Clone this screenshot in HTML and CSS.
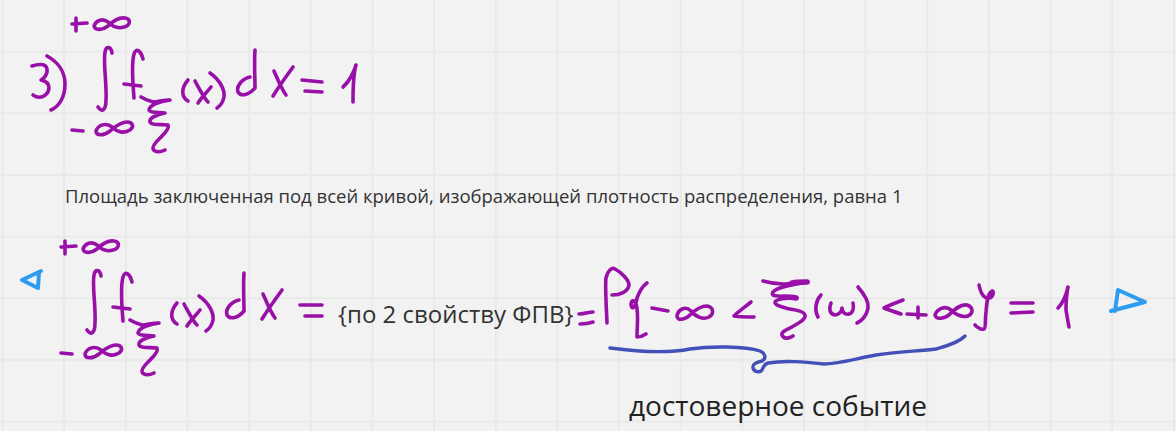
FILE: index.html
```html
<!DOCTYPE html>
<html lang="ru">
<head>
<meta charset="utf-8">
<title>Плотность распределения</title>
<link rel="stylesheet" href="styles.css">
</head>
<body>
<main class="board">
  <svg class="ink" width="1176" height="431" viewBox="0 0 1176 431" aria-hidden="true">
    <defs>
      <g id="integral">
        <path d="M72,24 L87,23 M76,18 L76,31"/>
        <path d="M94,26 C96,20 103,18 108,22 C112,26 118,29 124,27 C131,25 131,19 125,18 C118,17 112,22 108,26 C103,30 95,31 94,26Z"/>
        <path d="M112,53 C111,46 106,46 105,52 C103,62 107,85 106,100 C106,110 102,113 98,107"/>
        <path d="M143,59 C141,51 136,47 134,54 C131,65 133,85 134,98 M124,84 L141,86"/>
        <path d="M141,97 C146,100 150,101 153,102 C158,102 163,100 170,100 C163,101 150,104 149,110 C150,113 160,112 165,113 C160,114 149,117 150,122 C152,126 163,124 168,125 C170,129 163,135 160,138 C157,141 152,146 153,149 C155,153 161,152 165,150"/>
        <path d="M188,80 C181,88 181,97 188,101"/>
        <path d="M195,81 C200,90 204,98 208,102 M211,87 C207,92 201,98 198,103"/>
        <path d="M210,73 C220,80 225,90 224,97 C223,102 220,106 217,108"/>
        <path d="M255,50 C254,62 255,76 255,88 M250,77 C242,79 236,86 238,92 C241,97 249,95 255,88"/>
        <path d="M293,67 C285,78 278,88 273,96 M274,71 C278,80 282,90 286,95"/>
        <path d="M72,130 L83,131"/>
        <path d="M96,131 C98,125 106,122 112,127 C117,132 124,134 130,130 C135,126 132,122 127,122 C120,122 115,127 110,131 C104,136 96,136 96,131Z"/>
      </g>
    </defs>

    <g class="purple">
      <path d="M32,66 C38,64 46,63 47,69 C48,75 43,79 41,80 C46,81 49,84 49,88 C48,96 40,100 33,95"/>
      <path d="M47,56 C58,62 65,72 65,84 C65,96 60,106 51,110"/>
      <use href="#integral"/>
      <path d="M302,80 L322,82 M305,91 L322,92"/>
      <path d="M343,87 C349,82 354,72 356,65 C353,75 353,90 353,102"/>

      <use href="#integral" transform="translate(-11 223)"/>
      <path d="M300,305 L322,305 M305,316 L322,316"/>

      <path d="M579,314 C585,314 589,312 593,312 M580,324 C585,324 590,323 593,322"/>
      <path d="M607,323 C606,300 605,285 606,278 C608,270 612,267 615,269 C621,272 629,280 629,285 C628,292 620,295 612,295"/>
      <path d="M647,283 C644,285 640,290 637,298 C636,306 632,311 631,305 C631,300 634,299 636,304 C639,312 637,325 637,337 C640,337 643,336 646,334"/>
      <path d="M652,308 L668,311"/>
      <path d="M677,316 C678,310 685,305 691,311 C696,317 703,320 709,317 C715,313 713,307 707,306 C700,306 694,311 690,315 C685,320 677,321 677,316Z"/>
      <path d="M751,302 C745,307 738,312 734,316 C740,317 748,317 754,317"/>
      <path d="M763,281 C770,283 778,284 783,284 C790,284 800,282 808,282 C798,284 778,286 773,292 C771,295 774,296 778,296 C785,297 792,297 797,298 C790,298 777,298 775,302 C775,306 783,307 790,309 C797,310 804,312 805,315 C806,320 797,324 790,328 C786,330 781,332 782,335 C784,340 790,338 793,336"/>
      <path class="thick" d="M792,283 C797,282 802,282 807,282 M783,297 C787,297 792,297 796,298"/>
      <path d="M821,295 C816,300 814,310 818,317"/>
      <path d="M831,303 C829,308 829,314 835,315 C839,315 842,311 842,308 C842,312 845,315 849,314 C853,313 854,308 853,303"/>
      <path d="M858,287 C865,295 869,302 868,308 C867,315 862,321 857,323"/>
      <path d="M903,300 C896,303 889,305 884,308 C889,310 895,312 901,314"/>
      <path d="M907,314 L926,315 M918,307 L918,318"/>
      <path d="M935,315 C937,309 945,305 951,310 C955,314 962,318 968,316 C974,313 973,307 967,305 C960,304 954,310 950,314 C945,319 936,320 935,315Z"/>
      <path d="M979,285 C981,295 985,299 989,298 C994,297 994,290 992,291 C988,293 987,300 986,312 C985,320 986,328 984,329 C981,330 978,328 975,325"/>
      <path d="M1011,303 L1033,303 M1011,313 L1033,312"/>
      <path d="M1058,308 C1062,304 1066,296 1068,287 C1066,297 1066,307 1066,310 C1067,316 1068,322 1069,327"/>
    </g>

    <g class="blue-ink">
      <path d="M610,348 C640,352 670,353 690,349 C710,346 745,346 760,351 C765,353 767,358 762,361 C757,362 752,364 753,368 C754,372 760,373 762,370 C764,366 764,364 768,363 C785,360 805,362 824,364 C840,364 858,358 876,355 C895,352 920,351 936,349 C946,346 958,343 965,336"/>
    </g>

    <g class="sky">
      <path d="M41,271 L22,280 L38,288 L39,272"/>
      <path d="M1111,311 L1145,302 L1118,290 L1115,311"/>
    </g>
  </svg>

  <p class="note note-area">Площадь заключенная под всей кривой, изображающей плотность распределения, равна 1</p>
  <p class="note note-prop">{по 2 свойству ФПВ}</p>
  <p class="note note-event">достоверное событие</p>
</main>
</body>
</html>
```
FILE: styles.css
```css
html, body {
  margin: 0;
  padding: 0;
  height: 100%;
}

body {
  overflow: hidden;
  background-color: #f2f2f2;
  font-family: "Open Sans", "Noto Sans", sans-serif;
}

.board {
  position: relative;
  width: 1176px;
  height: 431px;
  overflow: hidden;
  background-image:
    linear-gradient(to right, #e9e9e9 2px, transparent 2px),
    linear-gradient(to bottom, #e9e9e9 2px, transparent 2px);
  background-size: 61.67px 61.67px;
  background-position: 1.5px -11px;
}

.ink {
  position: absolute;
  inset: 0;
  fill: none;
  stroke-linecap: round;
  stroke-linejoin: round;
}

.purple {
  stroke: #9810a8;
  stroke-width: 3.6;
}

.thick {
  stroke-width: 5.5;
}

.blue-ink {
  stroke: #4350b8;
  stroke-width: 3.4;
}

.sky {
  stroke: #2d9cf0;
  stroke-width: 4;
}

.note {
  position: absolute;
  margin: 0;
  white-space: nowrap;
  color: #333;
}

.note-area {
  left: 65px;
  top: 184px;
  font-size: 18.5px;
  line-height: 24px;
}

.note-prop {
  left: 338px;
  top: 300px;
  font-size: 24px;
  line-height: 28px;
}

.note-event {
  left: 629px;
  top: 386px;
  font-size: 28px;
  line-height: 38px;
  color: #222;
}
```
